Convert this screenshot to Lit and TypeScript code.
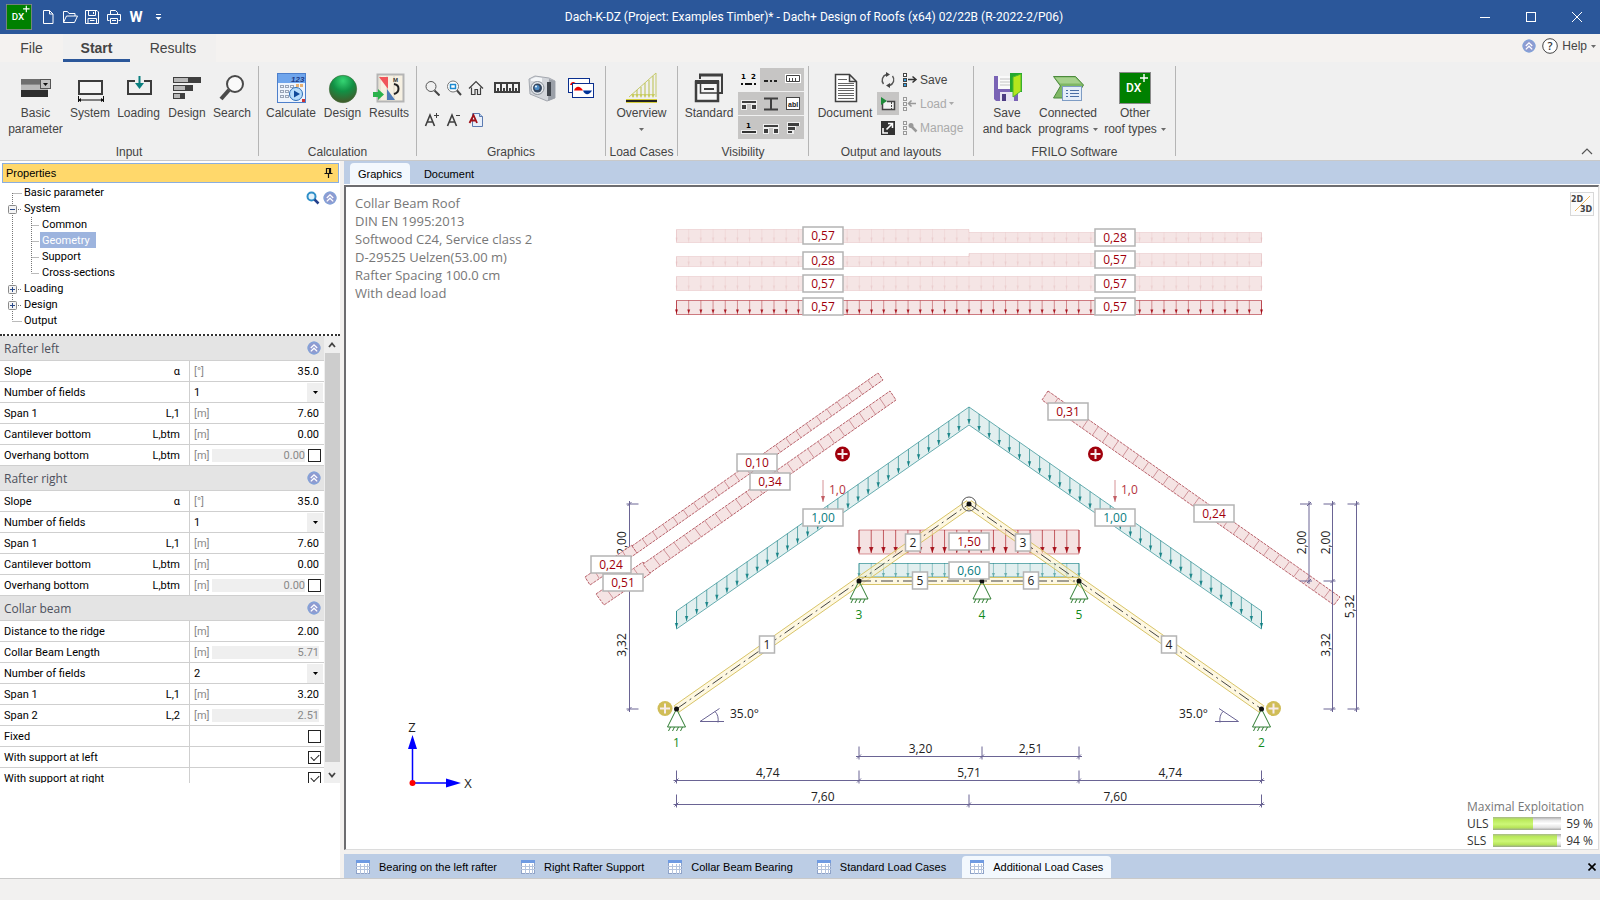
import { LitElement, html, svg, css } from "lit";
import { customElement, state } from "lit/decorators.js";
import { classMap } from "lit/directives/class-map.js";
import { styleMap } from "lit/directives/style-map.js";

/* ---------- icons ---------- */

const icon = (w: number, h: number, body: unknown) =>
  html`<svg width=${w} height=${h} viewBox="0 0 ${w} ${h}" aria-hidden="true">${body}</svg>`;

const dxLogo = (s: number) =>
  html`<svg width=${s} height=${s} viewBox="0 0 32 32" aria-hidden="true">
    <rect x=".5" y=".5" width="31" height="31" fill="#008000" stroke="#8a8a8a" />
    <text x="7" y="20" font-family="Roboto, sans-serif" font-size="12" font-weight="500" fill="#fff">DX</text>
    <path d="M25 2v8M21 6h8" stroke="#fff" stroke-width="1.4" />
  </svg>`;

const roundChevron = () =>
  icon(14, 14, svg`<circle cx="7" cy="7" r="6.5" fill="#8f9bd0"/><circle cx="7" cy="7" r="6" fill="none" stroke="#7fa6dc"/>
    <path d="M3.8 7 7 3.8 10.2 7M3.8 10.4 7 7.2l3.2 3.2" fill="none" stroke="#fff" stroke-width="1.3"/>`);

const caret = (c = "#6a6a6a") => icon(5, 3, svg`<path d="M0 0h5L2.5 3z" fill=${c}/>`);

const ic: Record<string, () => unknown> = {
  newFile: () => icon(16, 16, svg`<path d="M3.5 1.500h6l3.500 3.500v9.500h-9.500zM9.500 1.500v3.500h3.500" fill="none" stroke="#fff"/>`),
  open: () => icon(16, 16, svg`<path d="M1.500 13.500v-11h4l1.500 2h6v2.500M1.500 13.500l3-6.500h11l-3 6.500z" fill="none" stroke="#fff"/>`),
  save: () => icon(16, 16, svg`<path d="M1.500 1.500h11.500l1.500 1.500v11.500h-13zM4.500 1.500v5h7v-5M9.500 3v2M4 14.500v-5h8.500v5M6 11.500h4.500" fill="none" stroke="#fff"/>`),
  print: () => icon(16, 16, svg`<path d="M4.500 5v-3.500h5l2 2V5M3.500 11.500h-2V5.500h13v6h-2M4.500 9.500h7v5h-7zM6 11.500h4" fill="none" stroke="#fff"/>`),
  param: () => icon(32, 32, svg`<path d="M1 7h27v7H1z" fill="#8c8c8c"/><path d="M1 7h20v5H1z" fill="#6e6e6e"/><path d="M1 13h27v5H1z" fill="#b9b9b9"/><path d="M1 18h27v7H1z" fill="#2e2e2e"/>
    <rect x="20.500" y="7.500" width="10" height="9" fill="#c4c4c4" stroke="#555"/><path d="M23 11h5l-2.500 3z" fill="#111"/>`),
  system: () => icon(32, 32, svg`<rect x="5" y="9" width="23" height="13" fill="#f4f4f4" stroke="#3c3c3c" stroke-width="2"/>
    <path d="M4.500 24v6M29.500 24v6M4 28h26" stroke="#111" fill="none"/><path d="M4 28l3-2v4zM30 28l-3-2v4z" fill="#111"/>`),
  loading: () => icon(32, 32, svg`<path d="M12 9H5v13h23V9h-7" fill="none" stroke="#3c3c3c" stroke-width="2"/><path d="M16.500 4v10" stroke="#0a7f7f" stroke-width="2"/><path d="M12 11l4.500 6 4.500-6z" fill="#0a7f7f"/>`),
  design: () => icon(32, 32, svg`<path d="M2 5h28v6H2zM2 13h20v6H2zM2 21h12v6H2z" fill="#3f3f3f"/><path d="M3 6h14v4H3zM3 14h11v4H3zM3 22h6v4H3z" fill="#b8b8b8"/>`),
  search: () => icon(32, 32, svg`<circle cx="19" cy="12" r="8" fill="#fafafa" stroke="#4a4a4a" stroke-width="2"/><path d="M13 18 5 27" stroke="#4a4a4a" stroke-width="4"/>`),
  calculate: () => icon(32, 32, svg`<rect x="2.500" y="1.500" width="28" height="29" fill="#eef4fd" stroke="#4d7fcb"/><path d="M3 2h27v9H3z" fill="#6fa5ec"/>
    <text x="16" y="10" font-family="Liberation Sans, sans-serif" font-size="8" font-style="italic" font-weight="700" fill="#1d3c86">123</text>
    <g fill="none" stroke="#9aa5b8"><rect x="5.500" y="13.500" width="3" height="2"/><rect x="10.500" y="13.500" width="3" height="2"/><rect x="15.500" y="13.500" width="3" height="2"/><rect x="5.500" y="18.500" width="3" height="2"/><rect x="10.500" y="18.500" width="3" height="2"/><rect x="5.500" y="23.500" width="3" height="2"/><rect x="10.500" y="23.500" width="3" height="2"/></g>
    <path d="M21 13.500h7" stroke="#e8b070" stroke-width="3" stroke-dasharray="3 1"/><circle cx="21" cy="22" r="6.500" fill="#b6dcfb" stroke="#2f6db5"/><path d="M19 18.500v7l6-3.500z" fill="#114a9a"/><path d="M27 27h3v3h-3z" fill="#c33"/>`),
  greenBall: () => html`<svg width="32" height="32" viewBox="0 0 32 32" aria-hidden="true">
    <defs><radialGradient id="gb" cx=".5" cy=".2" r=".85"><stop offset="0" stop-color="#35d573"/><stop offset=".45" stop-color="#119145"/><stop offset="1" stop-color="#4a5227"/></radialGradient></defs>
    <circle cx="16" cy="17" r="13.700" fill="url(#gb)" stroke="#3e6b3a" stroke-width=".6"/></svg>`,
  results: () => icon(38, 32, svg`<rect x="7.500" y="2.500" width="26" height="27" fill="#f6f0e2" stroke="#b5b5b5" stroke-width="2"/><path d="M10 4v24M17 4v24M24 4v24" stroke="#ddd6c6"/>
    <path d="M9 5h9v12z" fill="#f0555a"/><path d="M17 17v11h8z" fill="#4f7bb8"/><text x="23" y="10" font-family="Liberation Sans, sans-serif" font-size="6" font-weight="700" fill="#333">M</text>
    <path d="M24 12c6 1 6 8 0 10" fill="none" stroke="#222" stroke-width="2"/><path d="M3 20h5v-3l6 5.500-6 5.500v-3H3z" fill="#2bb24c"/>`),
  zoom: () => icon(16, 16, svg`<circle cx="7" cy="6.500" r="5" fill="none" stroke="#555"/><path d="m10.500 10.500 5 5" stroke="#444" stroke-width="2"/>`),
  zoomFit: () => icon(16, 16, svg`<circle cx="7" cy="6.500" r="5.500" fill="#fff" stroke="#777"/><path d="m11 10.500 4 4.500" stroke="#444" stroke-width="2"/><rect x="4.500" y="4.500" width="5" height="4" fill="#fff" stroke="#1d8ad0" stroke-width="1.500"/>`),
  home: () => icon(16, 16, svg`<path d="M1 8.500 8 1.500l7 7M3.500 7.500v7h3.500v-5h2.500v5h3v-7" fill="none" stroke="#3f3f3f" stroke-width="1.200"/>`),
  ruler: () => icon(26, 14, svg`<rect y="1" width="26" height="11" fill="#3f3f3f"/><path d="M2 10V3h4v7H5V7H3v3zM8 10V3h4v7h-1V7H9v3zM14 10V3h4v7h-1V7h-2v3zM20 10V3h4v7h-1V7h-2v3z" fill="#f5f5f5"/>`),
  camera: () => icon(30, 28, svg`<path d="M2 5 8 2l14 2 6 3v17l-8 3L3 20z" fill="#d3d6db" stroke="#a4a8af"/><path d="M22 5l6 2v17l-7 3z" fill="#9ba0a8"/><path d="M4 5l5-2 6 1v4L4 7z" fill="#f4f6f8"/><path d="M20 8h4v14h-4z" fill="#3f444b"/>
    <circle cx="10.500" cy="14" r="6.500" fill="#e6e9ed" stroke="#8a9199"/><circle cx="10.500" cy="14" r="4.500" fill="#34465e"/><circle cx="10" cy="13.500" r="2.600" fill="#4a8ac5"/><circle cx="9" cy="12.500" r="1" fill="#e9f6ff"/>`),
  waves: () => icon(26, 20, svg`<rect x=".500" y=".500" width="21" height="14" fill="#fff" stroke="#0a2f8f"/><path d="M2 7c1-4 5-4 7 0z" fill="#e00"/><rect x="4.500" y="5.500" width="21" height="14" fill="#fff" stroke="#0a2f8f"/><path d="M6 12.500c2-5 6-5 9 0z" fill="#e00"/><path d="M15 12.500c2 5 6 5 9 0z" fill="#003399"/>`),
  fontUp: () => icon(16, 16, svg`<path d="M1.500 14 6 3l4.500 11M3 10h6" fill="none" stroke="#3f3f3f" stroke-width="1.600"/><path d="M12.500 1v5M10 3.500h5" stroke="#3f3f3f"/>`),
  fontDown: () => icon(16, 16, svg`<path d="M1.500 14 6 3l4.500 11M3 10h6" fill="none" stroke="#3f3f3f" stroke-width="1.600"/><path d="M10 3.500h4" stroke="#3f3f3f"/>`),
  fontDoc: () => icon(16, 16, svg`<path d="M4.500 1.500h7l3 3v10h-10z" fill="#e8effa" stroke="#5b7ab0"/><path d="M11.500 1.500v3h3" fill="#b9cbe6" stroke="#5b7ab0"/><path d="M1.500 11 5.500 3l3.500 8M3 8.500h5" fill="none" stroke="#a01018" stroke-width="1.800"/>`),
  overview: () => icon(32, 32, svg`<path d="M3 25 30 1v24" fill="none" stroke="#c5c96a"/><path d="M7 22v3M11 18v6M15 15v9M19 11v13M23 8v16M27 4v20" stroke="#b9bf4a"/><path d="M5 22l2 4 2-4zM9 22l2 4 2-4zM13 22l2 4 2-4zM17 22l2 4 2-4zM21 22l2 4 2-4zM25 22l2 4 2-4z" fill="#c8cc60"/><path d="M0 27h31v4H0z" fill="#d6cf3d"/><path d="M0 28h31v2H0z" fill="#222"/>`),
  standard: () => icon(32, 32, svg`<path d="M7 7V3h22v18h-4" fill="none" stroke="#3f3f3f" stroke-width="2"/><path d="M6 3h24" stroke="#3f3f3f" stroke-width="3"/><rect x="3" y="10" width="22" height="19" fill="#f7f7f7" stroke="#3f3f3f" stroke-width="2.500"/><path d="M2 10h24" stroke="#3f3f3f" stroke-width="4"/><path d="M7.500 12v9H25" fill="none" stroke="#3f3f3f" stroke-width="1.500"/><path d="M11 17h10" stroke="#3f3f3f" stroke-width="2"/>`),
  v1: () => icon(16, 16, svg`<text x="0" y="7" font-family="DejaVu Sans, sans-serif" font-size="7" font-weight="700">1</text><text x="10" y="7" font-family="DejaVu Sans, sans-serif" font-size="7" font-weight="700">2</text><path d="M0 12h2M4 12h7M13 12h2" stroke="#111" stroke-width="2"/>`),
  v2: () => icon(16, 16, svg`<path d="M1 9h4M7 9h2M11 9h3" stroke="#222" stroke-width="2"/>`),
  v3: () => icon(16, 16, svg`<path d="M0 2h16v9H0z" fill="#fff"/><path d="M1.500 3.500h13v6h-13zM4.500 6v3M7.500 6v3M10.500 6v3" fill="none" stroke="#444"/>`),
  v4: () => icon(16, 16, svg`<path d="M0 4h16v10h-6V8H6v6H0z" fill="#eee"/><path d="M1 5h14v2H1zM1 9h4v4H1zM11 9h4v4h-4z" fill="#3f3f3f"/>`),
  v5: () => icon(16, 16, svg`<path d="M1 1.500h14v2H1zM1 12.500h14v2H1zM7 3h2v10H7z" fill="#3f3f3f"/>`),
  v6: () => icon(16, 16, svg`<rect x="1.500" y="1.500" width="13" height="12" fill="#fff" stroke="#444"/><text x="3" y="10.500" font-family="Liberation Sans, sans-serif" font-weight="700" font-size="7" fill="#222">abl</text>`),
  v7: () => icon(16, 16, svg`<text x="5" y="8" font-family="DejaVu Sans, sans-serif" font-size="7" font-weight="700">1</text><path d="M0 10h16v4H0z" fill="#eee"/><path d="M1 11h14v2H1z" fill="#333"/>`),
  v9: () => icon(16, 16, svg`<path d="M2 2h13v4h-4v4H9v4H2z" fill="#eee"/><path d="M3 3h11v3H3zM3 7h7v3H3zM3 11h4v2H3z" fill="#3f3f3f"/>`),
  document: () => icon(32, 32, svg`<path d="M6.500 2.500h14l7 7v20h-21zM20.500 2.500v7h7" fill="#fff" stroke="#3f3f3f" stroke-width="1.500"/><path d="M9 7.500h9M9 11.500h16M9 13.500h16M9 16.500h16M9 18.500h16M9 21.500h16M9 23.500h16M9 26.500h16" stroke="#666"/>`),
  refresh: () => icon(16, 16, svg`<path d="M6.500 2.500a6 6 0 0 0-3 9.500M9.500 13.500a6 6 0 0 0 3-9.500" fill="none" stroke="#555" stroke-width="1.400"/><path d="M6 0l4 2.500L6 5zM10 11l-4 2.500 4 2.500z" fill="#444"/>`),
  screen: () => icon(16, 16, svg`<path d="M2.500 4v9.500h12v-8H7" fill="#f2f2f2" stroke="#444" stroke-width="1.500"/><path d="M11.500 6v7" stroke="#444" stroke-dasharray="2 1"/><path d="M1 1v8l6-4z" fill="#1e8b3a"/>`),
  expand: () => icon(16, 16, svg`<rect x="1" y="1" width="14" height="14" fill="#333"/><path d="M3 8v5h5M8 3.500h4.500V8M12 4 6.500 9.500" fill="none" stroke="#fff" stroke-width="1.600"/>`),
  dbSave: () => icon(16, 16, svg`<g stroke="#444"><rect x="1.500" y="1.500" width="3" height="3" fill="#fff"/><rect x="1.500" y="6.500" width="3" height="3" fill="#3aa0e0"/><rect x="1.500" y="11.500" width="3" height="3" fill="#3aa0e0"/></g><path d="M6 7.500h7M10.500 4.500l3.500 3-3.500 3" fill="none" stroke="#333" stroke-width="1.500"/>`),
  dbLoad: () => icon(16, 16, svg`<g stroke="#999" fill="#f4f4f4"><rect x="1.500" y="1.500" width="3" height="3"/><rect x="1.500" y="6.500" width="3" height="3"/><rect x="1.500" y="11.500" width="3" height="3"/></g><path d="M7 7.500h7M9.500 4.500 6.500 7.500l3 3" fill="none" stroke="#999" stroke-width="1.500"/>`),
  dbManage: () => icon(16, 16, svg`<g stroke="#999" fill="#f4f4f4"><rect x="1.500" y="1.500" width="3" height="3"/><rect x="1.500" y="6.500" width="3" height="3"/><rect x="1.500" y="11.500" width="3" height="3"/></g><path d="m9 6 5.500 5.500" stroke="#999" stroke-width="2.500"/><circle cx="9" cy="5.500" r="2.500" fill="#999"/>`),
  saveBack: () => icon(32, 32, svg`<path d="M3 4h24v25H5l-2-2z" fill="#7a63b5"/><path d="M7 4h17v13H7z" fill="#fafafa"/><path d="M9 7h12M9 10h12M9 13h12" stroke="#c4c4c4"/><path d="M9 20h14v9H9z" fill="#e7e3f2"/><path d="M11 22h4v7h-4z" fill="#4c3c82"/>
    <path d="M19 1h12v19h-12z" fill="#25a82f"/><path d="M22 5l8-3v17l-8 6z" fill="#b5e61d" stroke="#4fb82a"/>`),
  connected: () => icon(34, 32, svg`<path d="M2.500 4.500h22l8 8.500-8 13h-22l7-12z" fill="#7fb765" stroke="#4b8a3c"/><path d="M4 5.500h20l6 6H9z" fill="#a6d18d"/><rect x="11.500" y="14.500" width="19" height="14" fill="#e4edf8" stroke="#7e9cc4"/><path d="M15 18.500h2M19 18.500h9M15 21.500h2M19 21.500h9M15 24.500h2M19 24.500h9" stroke="#4a6fa5"/>`),
  gridTab: () => icon(14, 14, svg`<rect x=".500" y=".500" width="13" height="13" fill="#fff" stroke="#8fa3c8"/><path d="M0 0h14v3H0z" fill="#6f9be2"/><path d="M0 6.500h14M0 9.500h14M4.500 4v10M8.500 4v10M11.500 4v10" stroke="#b5c4dd"/>`),
  pin: () => icon(10, 12, svg`<path d="M2.500 6V1.500h4V6M5.500 1v5M.5 6.500h8M4.500 7v4" fill="none" stroke="#111" stroke-width="1.200"/>`),
  blueZoom: () => icon(14, 14, svg`<circle cx="5.500" cy="5.500" r="4" fill="#e3f2fb" stroke="#2f8fc8" stroke-width="2"/><path d="m8.500 8.500 4 4" stroke="#23408c" stroke-width="2.500"/>`),
};

/* ---------- roof drawing ---------- */

const N1 = [676.5, 709], N2 = [1261.5, 709], RIDGE = [969, 504];
const N3 = [859, 581], N4 = [982, 581], N5 = [1079, 581];
const RED = "#a0000c", TEAL = "#0a7c80", DIM = "#6a6494";

const range = (n: number) => Array.from({ length: n }, (_, i) => i);
const pts = (...p: number[][]) => p.map((q) => q.join(",")).join(" ");

const arrow = (x: number, y1: number, y2: number, c: string, w = 2, h = 5) =>
  svg`<path d="M${x} ${y1}V${y2}" stroke=${c} stroke-opacity=".6" fill="none"/><path d="M${x - w} ${y2 - h}h${w * 2}L${x} ${y2}z" fill=${c} fill-opacity=".85"/>`;

const tag = (x: number, y: number, t: string, c: string, w = 40) =>
  svg`<rect x=${x - w / 2} y=${y - 9} width=${w} height="17" fill="#fff" stroke="#b4b4b4" stroke-width="1.500"/>
  <text x=${x} y=${y + 4} text-anchor="middle" fill=${c}>${t}</text>`;

const snow = (y: number, left: number, right: number, strong: boolean) => svg`
  <path d="M676.500 ${y}V${y - left}H969V${y - right}H1261.500V${y}z" fill="#f5e5e5" stroke=${RED} stroke-opacity=${strong ? 0.5 : 0.1}/>
  ${range(49).map((i) => {
    const x = 676.5 + (i * 585) / 48;
    return svg`<path d="M${x} ${y - (i < 24 ? left : right)}V${y}" stroke=${RED} stroke-opacity=${strong ? 0.4 : 0.05}/>
    <path d="M${x - 1.5} ${y - 5}h3l-1.500 4z" fill=${RED} fill-opacity=${strong ? 0.85 : 0.05}/>`;
  })}`;

/* strip of wind load along a rafter: a..b outer edge, c..d inner edge */
const wind = (a: number[], b: number[], c: number[], d: number[], n: number) => svg`
  <polygon points=${pts(a, b, d, c)} fill="#f5e4e4" stroke="#b9616a" stroke-dasharray="3 1"/>
  ${range(n).map((i) => {
    const t = (i + 1) / (n + 1);
    return svg`<path d="M${a[0] + (b[0] - a[0]) * t} ${a[1] + (b[1] - a[1]) * t}L${c[0] + (d[0] - c[0]) * t} ${c[1] + (d[1] - c[1]) * t}" stroke="#cf9298"/>`;
  })}`;

const beam = (a: number[], b: number[], h: number) => {
  const l = Math.hypot(b[0] - a[0], b[1] - a[1]);
  const dx = ((b[1] - a[1]) / l) * h, dy = (-(b[0] - a[0]) / l) * h;
  return svg`<polygon points=${pts([a[0] + dx, a[1] + dy], [b[0] + dx, b[1] + dy], [b[0] - dx, b[1] - dy], [a[0] - dx, a[1] - dy])} fill="#fdf3cf" fill-opacity=".6" stroke="#d8c468"/>
  <path d="M${a.join(" ")}L${b.join(" ")}" stroke="#444" stroke-dasharray="12 4 2 4" fill="none"/>`;
};

const support = (p: number[], n: string) => svg`
  <path d="M${p[0]} ${p[1]}l-9 18h18zM${p[0] - 6} ${p[1] + 18}l-2 4M${p[0] - 2} ${p[1] + 18}l-2 4M${p[0] + 2} ${p[1] + 18}l-2 4M${p[0] + 6} ${p[1] + 18}l-2 4" fill="none" stroke="#2f7d32"/>
  <text x=${p[0]} y=${p[1] + 38} text-anchor="middle" fill="#128a1c">${n}</text>`;

const plus = (x: number, y: number, c: string) => svg`
  <circle cx=${x} cy=${y} r="7.500" fill=${c}/><path d="M${x - 5} ${y}h10M${x} ${y - 5}v10" stroke="#f7ecec" stroke-width="2"/>`;

const hDim = (y: number, xs: number[], labels: string[]) => svg`
  <path d="M${xs[0] - 3} ${y}H${xs[xs.length - 1] + 3}" stroke=${DIM}/>
  ${xs.map((x) => svg`<path d="M${x} ${y - 10}v13M${x - 2} ${y + 2}l4-4" stroke=${DIM}/>`)}
  ${labels.map((t, i) => svg`<text x=${(xs[i] + xs[i + 1]) / 2} y=${y - 4} text-anchor="middle">${t}</text>`)}`;

const vDim = (x: number, ys: number[], labels: string[]) => svg`
  <path d="M${x} ${ys[0] - 3}V${ys[ys.length - 1] + 3}" stroke=${DIM}/>
  ${ys.map((y) => svg`<path d="M${x - 3} ${y}h12M${x - 2} ${y + 2}l4-4" stroke=${DIM} transform=${x > 1000 ? `rotate(180 ${x} ${y})` : ""}/>`)}
  ${labels.map((t, i) => {
    const y = (ys[i] + ys[i + 1]) / 2;
    return svg`<text transform="translate(${x - 3} ${y}) rotate(-90)" text-anchor="middle">${t}</text>`;
  })}`;

@customElement("roof-drawing")
class RoofDrawing extends LitElement {
  static styles = css`
    :host { display: block; height: 100%; }
    .scene { display: block; width: 100%; height: 100%; font: 12px "Open Sans", "Noto Sans", sans-serif; fill: #222; }
    .axis { font-size: 13px; }
  `;
  render() {
    return html`<svg class="scene" viewBox="346 187 1252 662" role="img" aria-label="Collar beam roof with loads and dimensions">
      ${vDim(629.5, [504, 709], [])}
      <text transform="translate(626 543) rotate(-90)" text-anchor="middle">2,00</text>
      <text transform="translate(626 645) rotate(-90)" text-anchor="middle">3,32</text>
      ${snow(242.5, 13, 10, false)}${snow(266.5, 10, 13, false)}${snow(290.5, 14, 14, false)}${snow(314.5, 14, 14, true)}
      ${wind([585, 577], [632, 545], [590, 585], [637, 553], 4)}
      ${wind([632, 546], [878, 373], [637, 553], [883, 380], 23)}
      ${wind([596, 594], [643, 562], [604, 605], [651, 573], 4)}
      ${wind([643, 564], [890, 391], [650, 573], [896, 400], 23)}
      ${wind([1048, 391], [1340, 597], [1042, 400], [1334, 605], 28)}
      <path d="M676.500 611 969 407 1261.500 611v18L969 425 676.500 629z" fill="#e2efef" stroke=${TEAL} stroke-opacity=".6"/>
      ${range(59).map((i) => {
        const x = 676.5 + (i * 585) / 58, y = 407 + (Math.abs(x - 969) * 204) / 292.5;
        return arrow(x, y, y + 17, TEAL, 1.7, 5);
      })}
      <path d="M859 554V530H1079V554z" fill="#f5e2e2" stroke=${RED} stroke-opacity=".4"/>
      ${range(19).map((i) => arrow(859 + (i * 220) / 18, 530, 553, RED, 2.2, 6))}
      <path d="M859 577V563.500H1079V577z" fill="#e2efef" stroke=${TEAL} stroke-opacity=".6"/>
      ${range(19).map((i) => svg`<g opacity=".6">${arrow(859 + (i * 220) / 18, 563, 577, TEAL, 1.6, 4)}</g>`)}
      ${beam(N1, RIDGE, 4)}${beam(RIDGE, N2, 4)}${beam(N3, N5, 3.5)}
      ${support(N1, "1")}${support(N2, "2")}${support(N3, "3")}${support(N4, "4")}${support(N5, "5")}
      ${[N1, N2, N3, N4, N5, RIDGE].map((p) => svg`<circle cx=${p[0]} cy=${p[1]} r="2.500" fill="#111"/>`)}
      <circle cx=${RIDGE[0]} cy=${RIDGE[1]} r="7" fill="none" stroke="#555"/>
      ${tag(823, 236, "0,57", RED)}${tag(1115, 238, "0,28", RED)}
      ${tag(823, 261, "0,28", RED)}${tag(1115, 260, "0,57", RED)}
      ${tag(823, 284, "0,57", RED)}${tag(1115, 284, "0,57", RED)}
      ${tag(823, 307, "0,57", RED)}${tag(1115, 307, "0,57", RED)}
      ${tag(757, 463, "0,10", RED)}${tag(770, 482, "0,34", RED)}
      ${tag(611, 565, "0,24", RED)}${tag(623, 583, "0,51", RED)}
      ${tag(1068, 412, "0,31", RED)}${tag(1214, 514, "0,24", RED)}
      ${tag(823, 518, "1,00", TEAL)}${tag(1115, 518, "1,00", TEAL)}
      ${tag(969, 542, "1,50", RED)}${tag(969, 571, "0,60", TEAL)}
      ${tag(767, 645, "1", "#222", 15)}${tag(913, 543, "2", "#222", 15)}${tag(1023, 543, "3", "#222", 15)}
      ${tag(1169, 645, "4", "#222", 15)}${tag(920, 581, "5", "#222", 15)}${tag(1031, 581, "6", "#222", 15)}
      ${plus(842.5, 454, RED)}${plus(1095.5, 454, RED)}${plus(665, 708.5, "#d0bd58")}${plus(1273.5, 708.5, "#d0bd58")}
      <g opacity=".7">${arrow(823, 480, 502, RED, 2, 6)}${arrow(1115, 480, 502, RED, 2, 6)}</g>
      <text x="829" y="494" fill="#b5343e">1,0</text><text x="1121" y="494" fill="#b5343e">1,0</text>
      ${vDim(1309, [504, 581], ["2,00"])}${vDim(1332.5, [504, 581, 709], ["2,00", "3,32"])}${vDim(1356.5, [504, 709], ["5,32"])}
      ${hDim(756.5, [859, 982, 1079], ["3,20", "2,51"])}
      ${hDim(780.5, [676.5, 859, 1079, 1261.5], ["4,74", "5,71", "4,74"])}
      ${hDim(804.5, [676.5, 969, 1261.5], ["7,60", "7,60"])}
      <path d="M719.500 708.500 700 721.500h24M715 711.500q4 4 3 11M1219 708.500l19.500 13H1215M1223 711.500q-4 4-3 11" fill="none" stroke=${DIM}/>
      <text x="730" y="718">35.0°</text><text x="1179" y="718">35.0°</text>
      <path d="M412.500 783V748M412.500 783H446" stroke="#00f" stroke-width="1.500"/>
      <path d="M412.500 735l4.500 14h-9zM461 783l-15 4.500v-9z" fill="#00f"/><circle cx="412.500" cy="783" r="3" fill="#f00"/>
      <g class="axis"><text x="412" y="732" text-anchor="middle">Z</text><text x="468" y="788" text-anchor="middle">X</text></g>
    </svg>`;
  }
}

/* ---------- property data ---------- */

type Row = { label: string; sym?: string; unit?: string; value?: string; kind?: "num" | "ro" | "roCheck" | "select" | "check"; on?: boolean };
const rafter: Row[] = [
  { label: "Slope", sym: "α", unit: "[°]", value: "35.0" },
  { label: "Number of fields", value: "1", kind: "select" },
  { label: "Span 1", sym: "L,1", unit: "[m]", value: "7.60" },
  { label: "Cantilever bottom", sym: "L,btm", unit: "[m]", value: "0.00" },
  { label: "Overhang bottom", sym: "L,btm", unit: "[m]", value: "0.00", kind: "roCheck" },
];
const sections: { title: string; rows: Row[] }[] = [
  { title: "Rafter left", rows: rafter },
  { title: "Rafter right", rows: rafter },
  {
    title: "Collar beam",
    rows: [
      { label: "Distance to the ridge", unit: "[m]", value: "2.00" },
      { label: "Collar Beam Length", unit: "[m]", value: "5.71", kind: "ro" },
      { label: "Number of fields", value: "2", kind: "select" },
      { label: "Span 1", sym: "L,1", unit: "[m]", value: "3.20" },
      { label: "Span 2", sym: "L,2", unit: "[m]", value: "2.51", kind: "ro" },
      { label: "Fixed", kind: "check" },
      { label: "With support at left", kind: "check", on: true },
      { label: "With support at right", kind: "check", on: true },
    ],
  },
];

@customElement("property-panel")
class PropertyPanel extends LitElement {
  @state() selected = "Geometry";
  static styles = css`
    :host { display: flex; flex-direction: column; min-height: 0; background: #fff; font: 11px Roboto, "Liberation Sans", sans-serif; color: #000; }
    * { box-sizing: border-box; }
    .head { display: flex; align-items: center; justify-content: space-between; height: 20px; margin: 2px 1px 1px 2px; padding: 0 4px 0 3px; background: #ffd86b; border: 1px solid #8aaee0; flex: none; }
    .head h2 { margin: 0; font: 11px "Liberation Sans", Arial, sans-serif; }
    .top { display: flex; justify-content: space-between; padding: 0 3px 3px 0; border-bottom: 2px dotted #333; height: 152px; flex: none; }
    .tools { display: flex; gap: 3px; padding-top: 7px; height: 26px; }
    ul { list-style: none; margin: 0; padding: 0; }
    .tree { padding-left: 24px; }
    .node { font: inherit; color: inherit; border: 0; background: none; padding: 0 6px 0 2px; height: 16px; margin-left: -2px; display: block; text-align: left; }
    .node.picked { background: #9db4de; color: #fff; }
    .sub { padding-left: 18px; }
    .lines { position: absolute; left: 6px; top: 0; }
    .treebox { position: relative; }
    .grid { flex: 1; display: flex; min-height: 0; margin-bottom: 95px; }
    .rows { flex: 1; overflow: hidden; }
    .sec { display: flex; align-items: center; justify-content: space-between; height: 25px; margin: 0; padding: 0 3px 0 4px; background: #e4e4e4; border-bottom: 1px solid #d0d0d0; font: 12px "Open Sans", sans-serif; color: #4c505c; }
    .row { display: grid; grid-template-columns: 190px 1fr; height: 21px; border-bottom: 1px solid #cfcfcf; }
    .lab { display: flex; justify-content: space-between; align-items: center; padding: 0 9px 0 4px; border-right: 1px solid #cfcfcf; }
    .val { display: flex; align-items: center; padding: 0 3px 0 4px; min-width: 0; }
    .unit { color: #888; width: 18px; flex: none; }
    .num { flex: 1; min-width: 0; border: 0; padding: 0 2px 0 0; margin: 0; background: none; font: inherit; color: inherit; text-align: right; height: 13px; }
    .num.ro { background: #efefef; color: #888; }
    .num.gap { margin-right: 3px; padding: 0; }
    .num.tail { margin-right: 2px; padding: 0; }
    select { appearance: none; flex: 1; height: 19px; margin-right: -2px; border: 0; padding: 0; font: inherit; color: inherit;
      background: linear-gradient(#efefef, #efefef) right / 16px 19px no-repeat #fff; }
    .sel { display: flex; flex: 1; position: relative; }
    .sel svg { position: absolute; right: 3px; top: 8px; pointer-events: none; }
    .box { appearance: none; flex: none; width: 13px; height: 13px; margin: 0; border: 1px solid #222; background: #fff; }
    .box:checked::after { content: ""; display: block; width: 7px; height: 4px; margin: 2px 0 0 2px; border: solid #222; border-width: 0 0 1px 1px; transform: rotate(-45deg); }
    .spacer { flex: 1; }
    .bar { display: flex; flex-direction: column; width: 16px; background: #efefef; flex: none; align-items: center; }
    .bar button { border: 0; padding: 0; width: 16px; height: 17px; background: none; display: grid; place-items: center; }
    .thumb { width: 15px; flex: 1; background: #cdcdcd; margin-bottom: 4px; }
    .mini { border: 0; background: none; padding: 0; display: flex; }
  `;
  private row(r: Row, id: string) {
    const kind = r.kind ?? "num";
    const ro = kind === "ro" || kind === "roCheck";
    return html`<div class="row">
      <label class="lab" for=${id}><span>${r.label}</span><span>${r.sym ?? ""}</span></label>
      <div class="val">
        ${r.unit ? html`<span class="unit">${r.unit}</span>` : ""}
        ${kind === "select"
          ? html`<span class="sel"><select id=${id}><option>${r.value}</option></select>${caret("#000")}</span>`
          : kind === "check"
          ? html`<span class="spacer"></span><input class="box" type="checkbox" id=${id} .checked=${!!r.on} />`
          : html`<input id=${id} type="text" class=${classMap({ num: true, ro, gap: kind === "roCheck", tail: kind === "ro" })} .value=${r.value ?? ""} ?readonly=${ro} />`}
        ${kind === "roCheck" ? html`<input class="box" type="checkbox" aria-label="${r.label} active" />` : ""}
      </div>
    </div>`;
  }
  private node(t: string) {
    return html`<button class=${classMap({ node: true, picked: t === this.selected })} @click=${() => (this.selected = t)}>${t}</button>`;
  }
  render() {
    return html`
      <div class="head"><h2>Properties</h2><button class="mini" aria-label="Pin">${ic.pin()}</button></div>
      <div class="top">
        <div class="treebox">
          <svg class="lines" width="36" height="146" aria-hidden="true">
            <g fill="none" stroke="#777" stroke-dasharray="1 1">
              <path d="M6.500 9v128M6.500 9.500H16M12 25.500h4M12 105.500h4M12 121.500h4M6.500 137.500H16M25.500 33v56M25.500 41.500h8M25.500 57.500h8M25.500 73.500h8M25.500 89.500h8"/>
            </g>
            ${[21.5, 101.5, 117.5].map((y, i) => svg`<rect x="2.500" y=${y} width="8" height="8" rx="1" fill="#f4f4f4" stroke="#8a8a8a"/><path d="M4 ${y + 4}h5${i ? `M6.500 ${y + 1.5}v5` : ""}" stroke="#2b4a8a"/>`)}
          </svg>
          <ul class="tree">
            <li>${this.node("Basic parameter")}</li>
            <li>${this.node("System")}
              <ul class="sub">${["Common", "Geometry", "Support", "Cross-sections"].map((t) => html`<li>${this.node(t)}</li>`)}</ul>
            </li>
            ${["Loading", "Design", "Output"].map((t) => html`<li>${this.node(t)}</li>`)}
          </ul>
        </div>
        <div class="tools"><button class="mini" aria-label="Search">${ic.blueZoom()}</button><button class="mini" aria-label="Collapse">${roundChevron()}</button></div>
      </div>
      <div class="grid">
        <div class="rows">
          ${sections.map((s, i) => html`<h3 class="sec">${s.title}<button class="mini" aria-label="Collapse ${s.title}">${roundChevron()}</button></h3>
            ${s.rows.map((r, j) => this.row(r, `p${i}-${j}`))}`)}
        </div>
        <div class="bar">
          <button aria-label="Scroll up">${icon(8, 6, svg`<path d="M1 5 4 1.500 7 5" fill="none" stroke="#444" stroke-width="1.800"/>`)}</button>
          <div class="thumb"></div>
          <button aria-label="Scroll down">${icon(8, 6, svg`<path d="M1 1 4 4.500 7 1" fill="none" stroke="#444" stroke-width="1.800"/>`)}</button>
        </div>
      </div>`;
  }
}

/* ---------- ribbon ---------- */

@customElement("ribbon-bar")
class RibbonBar extends LitElement {
  static styles = css`
    :host { display: flex; height: 99px; padding-top: 4px; background: #f0f0f0; border-bottom: 1px solid #c9c9c9; box-sizing: border-box; font: 12px "Liberation Sans", Arial, sans-serif; color: #444; }
    * { box-sizing: border-box; }
    .group { display: flex; flex-direction: column; height: 90px; border-right: 1px solid #b5b5b5; align-items: center; justify-content: space-between; }
    .items { display: flex; align-items: flex-start; height: 78px; padding-top: 6px; }
    .title { height: 8px; line-height: 8px; white-space: nowrap; }
    button { font: inherit; color: inherit; border: 0; background: none; padding: 0; }
    .big { display: flex; flex-direction: column; align-items: center; line-height: 16px; white-space: nowrap; }
    .big svg { margin-bottom: 1px; }
    .g-input { width: 259px; } .g-calc { width: 158px; } .g-graph { width: 189px; } .g-load { width: 72px; }
    .g-vis { width: 131px; } .g-out { width: 165px; } .g-soft { width: 202px; }
    .g-out .items, .g-soft .items { align-self: flex-start; padding-left: 4px; }
    .w45 { width: 45px; } .w48 { width: 48px; } .w52 { width: 52px; } .w58 { width: 58px; } .w64 { width: 64px; } .w70 { width: 70px; }
    .cap { display: flex; align-items: center; gap: 4px; }
    .cap svg { margin: 0; }
    .arrow { height: 16px; display: grid; place-items: center; }
    .arrow svg { margin: 0; }
    .tools { display: grid; grid-template-columns: 22px 22px 22px 40px 30px 48px; grid-template-rows: 28px 16px; row-gap: 10px; align-items: center; justify-items: center; align-content: start; padding: 8px 0 0 4px; }
    .tools button { display: grid; place-items: center; }
    .vis { display: grid; grid-template-columns: repeat(3, 22px); grid-auto-rows: 23px; row-gap: 1px; margin: -4px 2px 0 0; }
    .vis button { display: grid; place-items: center; }
    .vis .on, .side .on { background: #c6c5c4; }
    .side { display: grid; grid-template-columns: 22px auto; grid-auto-rows: 23px; row-gap: 1px; margin-top: -4px; column-gap: 2px; }
    .side button { display: flex; align-items: center; justify-content: flex-start; gap: 2px; padding-left: 1px; }
    .side .ico { justify-content: center; padding: 0; }
    .side button:disabled { color: #aaa; }
    .end { flex: 1; display: flex; align-items: flex-end; justify-content: flex-end; padding: 0 7px 2px 0; }
  `;
  private big(i: unknown, lines: string[], w: string, drop = false) {
    return html`<button class="big ${w}">${i}${lines.map((l, k) =>
      html`<span class="cap">${l}${drop && k === lines.length - 1 ? caret() : ""}</span>`)}</button>`;
  }
  private small(n: string, label: string, cls = "") {
    return html`<button class=${cls} aria-label=${label}>${ic[n]()}</button>`;
  }
  render() {
    return html`
      <div class="group g-input"><div class="items">
        ${this.big(ic.param(), ["Basic", "parameter"], "w64")}${this.big(ic.system(), ["System"], "w45")}${this.big(ic.loading(), ["Loading"], "w52")}
        ${this.big(ic.design(), ["Design"], "w45")}${this.big(ic.search(), ["Search"], "w45")}
      </div><div class="title">Input</div></div>
      <div class="group g-calc"><div class="items">
        ${this.big(ic.calculate(), ["Calculate"], "w58")}${this.big(ic.greenBall(), ["Design"], "w45")}${this.big(ic.results(), ["Results"], "w48")}
      </div><div class="title">Calculation</div></div>
      <div class="group g-graph"><div class="items tools">
        ${this.small("zoom", "Zoom")}${this.small("zoomFit", "Zoom to fit")}${this.small("home", "Home")}
        ${this.small("ruler", "Scale")}${this.small("camera", "Camera")}${this.small("waves", "Result graphics")}
        ${this.small("fontUp", "Larger text")}${this.small("fontDown", "Smaller text")}${this.small("fontDoc", "Font")}
      </div><div class="title">Graphics</div></div>
      <div class="group g-load"><div class="items">
        <button class="big w70">${ic.overview()}<span>Overview</span><span class="arrow">${caret()}</span></button>
      </div><div class="title">Load Cases</div></div>
      <div class="group g-vis"><div class="items">
        ${this.big(ic.standard(), ["Standard"], "w58")}
        <div class="vis">
          ${this.small("v1", "Node numbers")}${this.small("v2", "Axes", "on")}${this.small("v3", "Dimensions", "on")}
          ${this.small("v4", "Supports", "on")}${this.small("v5", "Sections", "on")}${this.small("v6", "Texts", "on")}
          ${this.small("v7", "Members", "on")}${this.small("v4", "Hinges", "on")}${this.small("v9", "Loads", "on")}
        </div>
      </div><div class="title">Visibility</div></div>
      <div class="group g-out"><div class="items">
        ${this.big(ic.document(), ["Document"], "w64")}
        <div class="side">
          <button class="ico" aria-label="Refresh">${ic.refresh()}</button><button>${ic.dbSave()}Save</button>
          <button class="ico on" aria-label="Auto refresh">${ic.screen()}</button><button disabled>${ic.dbLoad()}Load ${caret("#aaa")}</button>
          <button class="ico" aria-label="Full view">${ic.expand()}</button><button disabled>${ic.dbManage()}Manage</button>
        </div>
      </div><div class="title">Output and layouts</div></div>
      <div class="group g-soft"><div class="items">
        ${this.big(ic.saveBack(), ["Save", "and back"], "w58")}${this.big(ic.connected(), ["Connected", "programs"], "w64", true)}${this.big(dxLogo(32), ["Other", "roof types"], "w70", true)}
      </div><div class="title">FRILO Software</div></div>
      <div class="end"><button aria-label="Collapse ribbon">${icon(12, 7, svg`<path d="m1 6 5-5 5 5" fill="none" stroke="#555" stroke-width="1.200"/>`)}</button></div>`;
  }
}

/* ---------- application ---------- */

@customElement("app-root")
class AppRoot extends LitElement {
  @state() tab = "Additional Load Cases";
  static styles = css`
    :host { display: flex; flex-direction: column; height: 100vh; overflow: hidden; background: #f3f1ef; font: 11px "Liberation Sans", Arial, sans-serif; color: #000; }
    * { box-sizing: border-box; }
    button { font: inherit; color: inherit; border: 0; background: none; padding: 0; }
    .titlebar { display: flex; align-items: center; height: 34px; flex: none; background: #2b579a; color: #fff; }
    .quick { display: flex; align-items: center; gap: 6px; padding-left: 6px; }
    .quick button { display: grid; place-items: center; width: 16px; height: 20px; }
    .quick .logo { width: 26px; height: 26px; margin-right: 2px; }
    .quick .w { font: bold 15px Roboto, sans-serif; }
    .title { flex: 1; margin: 0; text-align: center; font: 12px Roboto, sans-serif; white-space: nowrap; }
    .win { display: flex; justify-content: flex-end; }
    .win button { width: 46px; height: 34px; display: grid; place-items: center; }
    .menu { display: flex; height: 28px; flex: none; background: #f4f2f0; font: 14px "Liberation Sans", Arial, sans-serif; color: #444; }
    .menu .m { height: 28px; width: 63px; padding-top: 2px; border-bottom: 3px solid transparent; }
    .menu .m.act { width: 67px; font-weight: bold; background: #f0f0f0; border-color: #2b579a; }
    .menu .m.wide { width: 86px; background: #f1f0ef; }
    .help { margin-left: auto; display: flex; align-items: center; gap: 6px; padding: 0 4px 4px 0; font-size: 12px; }
    .help button { display: flex; align-items: center; gap: 4px; }
    .main { flex: 1; min-height: 0; display: grid; grid-template-columns: 340px minmax(0, 1fr); column-gap: 4px; }
    .work { display: flex; flex-direction: column; min-width: 0; min-height: 0; }
    .strip { display: flex; align-items: flex-end; height: 24px; flex: none; background: #bccde5; border-bottom: 1px solid #fff; padding: 0 6px; }
    .strip button { height: 21px; width: 60px; border-radius: 4px 4px 0 0; }
    .strip .act { background: #f3f8fd; }
    .strip .doc { width: 78px; }
    .canvas { position: relative; flex: 1; min-height: 0; background: #fff; border: 1px solid #dcdcdc; border-top: 2px solid #6d6d70; border-left: 2px solid #6d6d70; margin: 0 1px 4px 0; }
    .info { position: absolute; left: 9px; top: 7px; margin: 0; padding: 0; list-style: none; font: 13px/18px "Open Sans", sans-serif; color: #777; }
    .view { position: absolute; right: 4px; top: 5px; width: 24px; height: 24px; }
    .use { position: absolute; right: 5px; bottom: 0; width: 126px; font: 12px/17px "Open Sans", sans-serif; color: #333; }
    .use p { margin: 0; color: #777; white-space: nowrap; }
    .meter { display: grid; grid-template-columns: 26px 68px 1fr; align-items: center; height: 17px; }
    .track { height: 13px; background: linear-gradient(#a8a8a8, #e8e8e8 25%, #fff 50%, #e4e4e4 80%, #a8a8a8); }
    .fill { height: 13px; background: linear-gradient(#a9b98a, #b9e95a 20%, #cdf777 55%, #b8e65a 80%, #9aa88a); }
    .meter span { text-align: right; white-space: nowrap; }
    .bottom { display: flex; align-items: flex-end; height: 24px; flex: none; background: #bccde5; padding-left: 4px; }
    .bottom .t { display: flex; align-items: center; gap: 9px; height: 22px; padding: 0 8px; margin-right: 8px; border-radius: 4px 4px 0 0; }
    .bottom .t.act { background: #f3f8fd; }
    .bottom .x { margin-left: auto; width: 16px; height: 22px; display: grid; place-items: center; }
    .status { height: 22px; flex: none; border-top: 1px solid #c9c9c9; background: #f2f1f0; }
  `;
  render() {
    const tabs = ["Bearing on the left rafter", "Right Rafter Support", "Collar Beam Bearing", "Standard Load Cases", "Additional Load Cases"];
    return html`
      <header class="titlebar">
        <div class="quick">
          <button class="logo" aria-label="Dach+">${dxLogo(26)}</button>
          <button aria-label="New">${ic.newFile()}</button><button aria-label="Open">${ic.open()}</button>
          <button aria-label="Save">${ic.save()}</button><button aria-label="Print">${ic.print()}</button>
          <button class="w">W</button><button aria-label="More">${icon(7, 8, svg`<path d="M1 1.500h5" stroke="#fff"/><path d="M.500 4h6l-3 3z" fill="#fff"/>`)}</button>
        </div>
        <h1 class="title">Dach-K-DZ (Project: Examples Timber)* - Dach+ Design of Roofs (x64) 02/22B (R-2022-2/P06)</h1>
        <div class="win">
          <button aria-label="Minimize">${icon(10, 10, svg`<path d="M0 5.500h10" stroke="#fff"/>`)}</button>
          <button aria-label="Maximize">${icon(10, 10, svg`<rect x=".500" y=".500" width="9" height="9" fill="none" stroke="#fff"/>`)}</button>
          <button aria-label="Close">${icon(10, 10, svg`<path d="M0 0l10 10M10 0 0 10" stroke="#fff"/>`)}</button>
        </div>
      </header>
      <nav class="menu">
        <button class="m">File</button><button class="m act">Start</button><button class="m wide">Results</button>
        <div class="help"><button aria-label="Collapse">${roundChevron()}</button>
          <button>${icon(16, 16, svg`<circle cx="8" cy="8" r="7.300" fill="#fff" stroke="#444"/><text x="8" y="12" text-anchor="middle" font-family="Open Sans, sans-serif" font-weight="600" font-size="11" fill="#333">?</text>`)}Help ${caret()}</button></div>
      </nav>
      <ribbon-bar></ribbon-bar>
      <main class="main">
        <property-panel></property-panel>
        <section class="work">
          <div class="strip"><button class="act">Graphics</button><button class="doc">Document</button></div>
          <div class="canvas">
            <roof-drawing></roof-drawing>
            <ul class="info"><li>Collar Beam Roof</li><li>DIN EN 1995:2013</li><li>Softwood C24, Service class 2</li><li>D-29525 Uelzen(53.00 m)</li><li>Rafter Spacing 100.0 cm</li><li>With dead load</li></ul>
            <button class="view" aria-label="Toggle 2D and 3D">${icon(24, 24, svg`<rect x=".500" y=".500" width="23" height="23" fill="#fcfcfc" stroke="#d8d8d8"/><path d="M5 19 20 4" stroke="#f0b860"/><text x="1" y="10" font-family="DejaVu Sans, sans-serif" font-weight="700" font-size="8" fill="#444">2D</text><text x="10" y="20" font-family="DejaVu Sans, sans-serif" font-weight="700" font-size="8" fill="#444">3D</text>`)}</button>
            <div class="use"><p>Maximal Exploitation</p>
              ${[["ULS", 59], ["SLS", 94]].map(([n, v]) => html`<div class="meter">${n}<div class="track"><div class="fill" style=${styleMap({ width: v + "%" })}></div></div><span>${v} %</span></div>`)}
            </div>
          </div>
          <div class="bottom">
            ${tabs.map((t) => html`<button class=${classMap({ t: true, act: t === this.tab })} @click=${() => (this.tab = t)}>${ic.gridTab()}${t}</button>`)}
            <button class="x" aria-label="Close">${icon(8, 8, svg`<path d="m.500.500 7 7M7.500.500l-7 7" stroke="#000" stroke-width="1.600"/>`)}</button>
          </div>
        </section>
      </main>
      <footer class="status"></footer>`;
  }
}
